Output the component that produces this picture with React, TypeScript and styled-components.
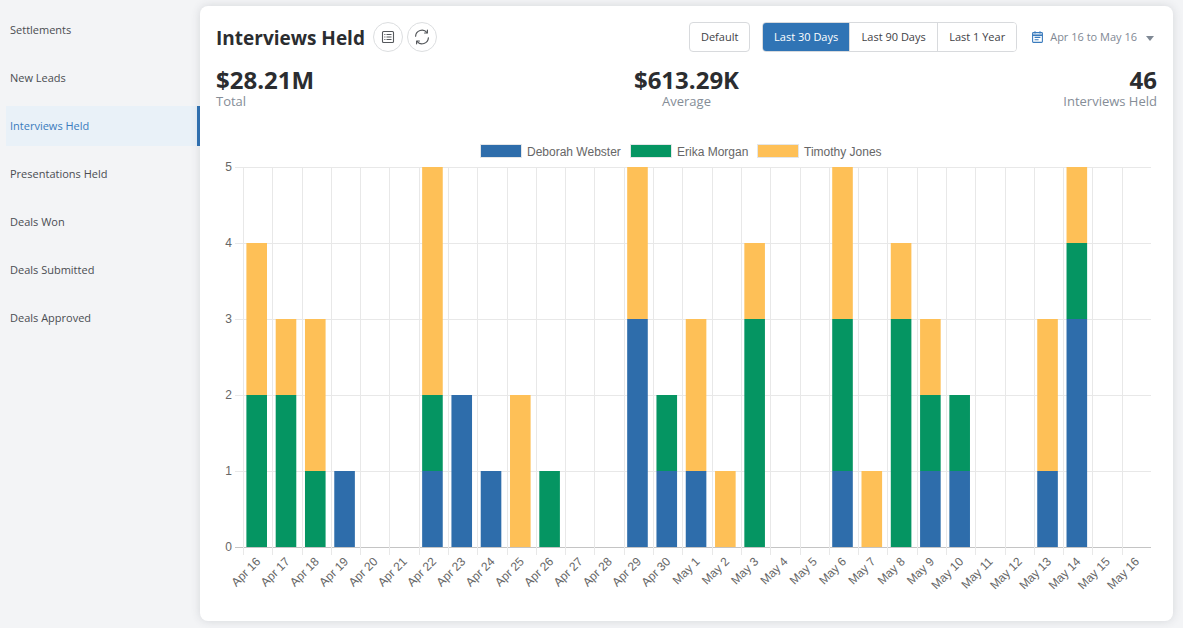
import React from "react";
import styled, { createGlobalStyle } from "styled-components";

const Global = createGlobalStyle`
  html, body { margin: 0; padding: 0; height: 100%; background: #f3f4f6; overflow: hidden; }
  * { box-sizing: border-box; }
  #root { height: 100%; font-family: "Open Sans", "Noto Sans", sans-serif; }
`;

const Page = styled.div`
  display: flex;
  align-items: flex-start;
  width: 1183px;
  height: 628px;
  background: #f3f4f6;
`;

const Sidebar = styled.nav`
  width: 200px;
  flex: none;
  display: flex;
  flex-direction: column;
  gap: 8px;
  padding: 10px 0 0 6px;
`;

const NavItem = styled.div<{ $active?: boolean }>`
  height: 40px;
  display: flex;
  align-items: center;
  padding: 0 0 2px 4px;
  font-size: 11px;
  color: ${(p) => (p.$active ? "#3a7bbd" : "#4a4d52")};
  background: ${(p) => (p.$active ? "#e9f1f8" : "transparent")};
  border-right: 3px solid ${(p) => (p.$active ? "#2f72b5" : "transparent")};
`;

const Card = styled.main`
  width: 973px;
  height: 615px;
  margin-top: 6px;
  padding: 16px 16px 0;
  background: #fff;
  border-radius: 8px;
  box-shadow: 0 0 10px rgba(60, 70, 80, 0.16);
`;

const Header = styled.header`
  display: flex;
  align-items: center;
  height: 30px;
`;

const Title = styled.h1`
  margin: 1px 8px 0 0;
  font-size: 19px;
  font-weight: 700;
  line-height: 30px;
  color: #2b2d30;
`;

const RoundButton = styled.button`
  width: 30px;
  height: 30px;
  margin-right: 4px;
  padding: 0;
  display: flex;
  align-items: center;
  justify-content: center;
  background: #fff;
  border: 1px solid #dcdee0;
  border-radius: 50%;
  color: #55585c;
`;

const Spacer = styled.div`
  flex: 1;
`;

const PlainButton = styled.button`
  width: 61px;
  height: 30px;
  margin-right: 12px;
  padding: 0 0 2px;
  font: 400 11px "Open Sans", sans-serif;
  color: #3f4246;
  background: #fff;
  border: 1px solid #d8dadd;
  border-radius: 4px;
`;

const Segmented = styled.div`
  display: flex;
  height: 30px;
  border: 1px solid #d8dadd;
  border-radius: 4px;
  overflow: hidden;
`;

const Segment = styled.button<{ $active?: boolean; $w: number }>`
  width: ${(p) => p.$w}px;
  height: 100%;
  padding: 0 0 2px;
  font: 400 11px "Open Sans", sans-serif;
  color: ${(p) => (p.$active ? "#fff" : "#3f4246")};
  background: ${(p) => (p.$active ? "#3074b5" : "#fff")};
  border: 0;
  border-left: ${(p) => (p.$active ? "0" : "1px solid #d8dadd")};
`;

const DateRange = styled.div`
  display: flex;
  align-items: center;
  margin-left: 15px;
  margin-right: 3px;
  font-size: 11px;
  color: #7f8894;
`;

const DateText = styled.span`
  margin: 0 9px 2px 7px;
`;

const Caret = styled.span`
  width: 0;
  height: 0;
  margin-top: 2px;
  border-left: 4px solid transparent;
  border-right: 4px solid transparent;
  border-top: 5px solid #7f8894;
`;

const Stats = styled.section`
  display: grid;
  grid-template-columns: 1fr 1fr 1fr;
  margin-top: 14px;
`;

const Stat = styled.div<{ $align: string }>`
  text-align: ${(p) => p.$align};
`;

const StatValue = styled.div`
  font-size: 24px;
  font-weight: 700;
  line-height: 28px;
  color: #2b2d30;
`;

const StatLabel = styled.div`
  font-size: 13px;
  line-height: 15px;
  color: #858d97;
`;

const ChartSvg = styled.svg`
  display: block;
  margin-top: 21px;
`;

const BLUE = "#2e6dab";
const GREEN = "#059562";
const YELLOW = "#fec057";
const COLORS = [BLUE, GREEN, YELLOW];

const days: [string, number, number, number][] = [
  ["Apr 16", 0, 2, 2], ["Apr 17", 0, 2, 1], ["Apr 18", 0, 1, 2], ["Apr 19", 1, 0, 0],
  ["Apr 20", 0, 0, 0], ["Apr 21", 0, 0, 0], ["Apr 22", 1, 1, 3], ["Apr 23", 2, 0, 0],
  ["Apr 24", 1, 0, 0], ["Apr 25", 0, 0, 2], ["Apr 26", 0, 1, 0], ["Apr 27", 0, 0, 0],
  ["Apr 28", 0, 0, 0], ["Apr 29", 3, 0, 2], ["Apr 30", 1, 1, 0], ["May 1", 1, 0, 2],
  ["May 2", 0, 0, 1], ["May 3", 0, 3, 1], ["May 4", 0, 0, 0], ["May 5", 0, 0, 0],
  ["May 6", 1, 2, 2], ["May 7", 0, 0, 1], ["May 8", 0, 3, 1], ["May 9", 1, 1, 1],
  ["May 10", 1, 1, 0], ["May 11", 0, 0, 0], ["May 12", 0, 0, 0], ["May 13", 1, 0, 2],
  ["May 14", 3, 1, 1], ["May 15", 0, 0, 0], ["May 16", 0, 0, 0],
];

const X0 = 243;
const X1 = 1151;
const Y0 = 547;
const UNIT = 76;
const STEP = (X1 - X0) / 31;
const BAR = 20.6;
const CHART_FONT = "'Liberation Sans', Arial, sans-serif";

const legend = [
  { name: "Deborah Webster", x: 480, color: BLUE },
  { name: "Erika Morgan", x: 630, color: GREEN },
  { name: "Timothy Jones", x: 757, color: YELLOW },
];

function Chart() {
  return (
    <ChartSvg width={941} height={470} viewBox="216 130 941 470">
      {legend.map((l) => (
        <g key={l.name}>
          <rect x={l.x + 0.5} y={144.5} width={41} height={13} fill={l.color} stroke="#e4e6e8" />
          <text x={l.x + 47} y={155.5} fontFamily={CHART_FONT} fontSize={12} fill="#666">{l.name}</text>
        </g>
      ))}
      {[0, 1, 2, 3, 4, 5].map((v) => {
        const y = Y0 - v * UNIT;
        return (
          <g key={v}>
            <line x1={235} x2={X1} y1={y + 0.5} y2={y + 0.5} stroke={v === 0 ? "#c4c4c4" : "#e8e8e8"} />
            <text x={232} y={y + 4} textAnchor="end" fontFamily={CHART_FONT} fontSize={12} fill="#666">{v}</text>
          </g>
        );
      })}
      {days.map((_, i) => {
        const x = Math.round(X0 + i * STEP) + 0.5;
        return <line key={i} x1={x} x2={x} y1={167} y2={555} stroke="#e8e8e8" />;
      })}
      {days.map((d, i) => {
        const x = X0 + i * STEP + 3.4;
        let base = Y0;
        return (
          <g key={d[0]}>
            {[d[1], d[2], d[3]].map((n, s) => {
              if (!n) return null;
              const h = n * UNIT;
              base -= h;
              return <rect key={s} x={x} y={base} width={BAR} height={h} fill={COLORS[s]} />;
            })}
            <text
              transform={`translate(${X0 + i * STEP + 12} 556) rotate(-45)`}
              textAnchor="end"
              dominantBaseline="hanging"
              fontFamily={CHART_FONT}
              fontSize={12}
              fill="#666"
            >
              {d[0]}
            </text>
          </g>
        );
      })}
    </ChartSvg>
  );
}

const ListIcon = () => (
  <svg width="14" height="14" viewBox="0 0 14 14" fill="none" stroke="currentColor" strokeWidth="1.1">
    <rect x="1.5" y="1.5" width="11" height="11" rx="1" />
    <path d="M5.5 4.5H10.5M5.5 7H10.5M5.5 9.5H10.5M3.3 4.5H4.4M3.3 7H4.4M3.3 9.5H4.4" />
  </svg>
);

const SyncIcon = () => (
  <svg width="16" height="16" viewBox="0 0 16 16" fill="none" stroke="currentColor" strokeWidth="1.2" strokeLinecap="round" strokeLinejoin="round">
    <path d="M1.6 7.2A6.4 6.4 0 0 1 13 3.6" />
    <path d="M13.4 1.2V4H10.6" />
    <path d="M14.4 8.8A6.4 6.4 0 0 1 3 12.4" />
    <path d="M2.6 14.8V12H5.4" />
  </svg>
);

const CalendarIcon = () => (
  <svg width="11" height="12" viewBox="0 0 11 12" fill="none" stroke="#3a7bbd" strokeWidth="1.1">
    <rect x="0.6" y="1.6" width="9.8" height="9.8" rx="0.8" />
    <path d="M0.6 4.2H10.4" strokeWidth="1.6" />
    <path d="M3 0.2V2.4M8 0.2V2.4" />
    <path d="M2.6 6.4H8.4M2.6 8.8H6.6" />
  </svg>
);

const navItems = ["Settlements", "New Leads", "Interviews Held", "Presentations Held", "Deals Won", "Deals Submitted", "Deals Approved"];

export default function App() {
  return (
    <Page>
      <Global />
      <Sidebar>
        {navItems.map((n) => (
          <NavItem key={n} $active={n === "Interviews Held"}>{n}</NavItem>
        ))}
      </Sidebar>
      <Card>
        <Header>
          <Title>Interviews Held</Title>
          <RoundButton aria-label="List"><ListIcon /></RoundButton>
          <RoundButton aria-label="Refresh"><SyncIcon /></RoundButton>
          <Spacer />
          <PlainButton>Default</PlainButton>
          <Segmented>
            <Segment $active $w={86}>Last 30 Days</Segment>
            <Segment $w={88}>Last 90 Days</Segment>
            <Segment $w={79}>Last 1 Year</Segment>
          </Segmented>
          <DateRange>
            <CalendarIcon />
            <DateText>Apr 16 to May 16</DateText>
            <Caret />
          </DateRange>
        </Header>
        <Stats>
          <Stat $align="left"><StatValue>$28.21M</StatValue><StatLabel>Total</StatLabel></Stat>
          <Stat $align="center"><StatValue>$613.29K</StatValue><StatLabel>Average</StatLabel></Stat>
          <Stat $align="right"><StatValue>46</StatValue><StatLabel>Interviews Held</StatLabel></Stat>
        </Stats>
        <Chart />
      </Card>
    </Page>
  );
}
